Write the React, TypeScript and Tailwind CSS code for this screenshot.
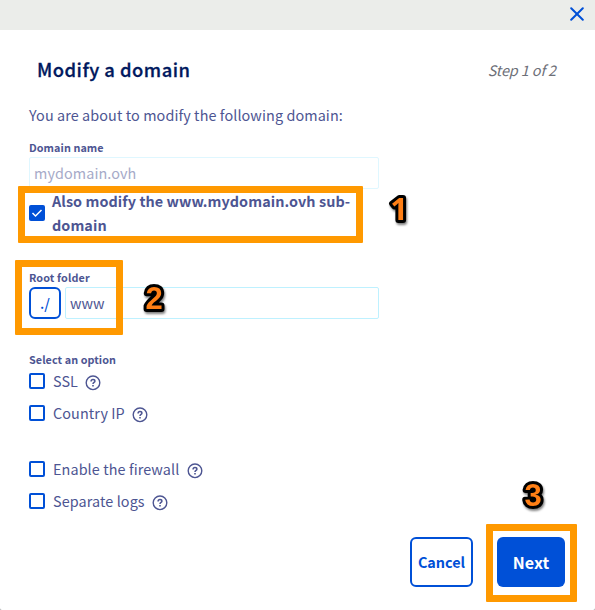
import type { ReactNode } from "react";

function HelpIcon() {
  return (
    <svg className="mt-[3px] h-4 w-4 shrink-0" viewBox="0 0 16 16" fill="none" stroke="#4d5592">
      <circle cx="8" cy="7.800" r="6.800" strokeWidth="1.4" />
      <path d="M6.100 6.400c0-1.200.8-1.800 1.900-1.800s1.900.7 1.900 1.600c0 1.200-1.900 1.300-1.900 2.700" strokeWidth="1.5" />
      <path d="M8 9.900v1.500" strokeWidth="1.600" />
    </svg>
  );
}

function Option({ label, text, className = "" }: { label: string; text: string; className?: string }) {
  return (
    <div className={`flex h-8 items-center ${className}`}>
      <span className="h-4 w-4 shrink-0 rounded-[2px] border-2 border-[#0050d7] bg-white" />
      <span className={`ml-2 shrink-0 whitespace-nowrap text-[14.4px] leading-6 tracking-[0.09px] ${text}`}>{label}</span>
      <HelpIcon />
    </div>
  );
}

function Marker({ children, className }: { children: ReactNode; className: string }) {
  return (
    <svg className={`absolute h-12 w-10 overflow-visible drop-shadow-[1px_2px_1px_rgba(0,0,0,0.5)] ${className}`} viewBox="0 0 40 48">
      <text
        x="20"
        y="35"
        textAnchor="middle"
        fill="#ff7f15"
        stroke="#000"
        strokeWidth="6"
        strokeLinejoin="round"
        paintOrder="stroke"
      >
        {children}
      </text>
    </svg>
  );
}

export default function App() {
  return (
    <div className="h-[610px] w-[595px] bg-[#a5a7a9]">
      <div className="relative flex h-[610px] flex-col overflow-hidden rounded-b-[2px] bg-white font-['Noto_Sans_CJK_SC',sans-serif] text-[#4d5592]">
        <header className="flex h-[30px] shrink-0 items-center justify-end bg-[#ebedea] pr-[11px]">
          <svg className="-mt-[2px] h-[14px] w-[14px]" viewBox="0 0 14 14" stroke="#0050d7" strokeWidth="2" strokeLinecap="round">
            <path d="M1.200 1.200 12.800 12.800M12.800 1.200 1.200 12.800" />
          </svg>
        </header>

        <div className="mt-6 flex h-8 items-center justify-between pl-[37px] pr-[38px]">
          <h1 className="-mt-[2px] text-[18.4px] font-medium leading-8 tracking-[0.48px] text-[#00185e] [-webkit-text-stroke:0.3px_#00185e]">
            Modify a domain
          </h1>
          <span className="mr-px text-[14.4px] italic leading-8 tracking-[-0.1px] text-[#6d6f78]">Step 1 of 2</span>
        </div>

        <main className="pl-[29px]">
          <p className="mt-[17px] text-[14.4px] leading-6 tracking-[0.09px]">You are about to modify the following domain:</p>
          <label className="mt-3 block h-[18px] text-[10.8px] font-bold leading-4 tracking-[0.07px]">Domain name</label>
          <div className="flex h-8 w-[350px] items-center rounded-[2px] border border-[#dff7ff] pl-1 text-[14.4px] tracking-[0.09px] text-[#a6aac8]">
            mydomain.ovh
          </div>
          <div className="flex h-12 items-center">
            <span className="flex h-4 w-4 shrink-0 items-center justify-center rounded-[2px] bg-[#0050d7]">
              <svg className="h-3 w-3" viewBox="0 0 12 12" fill="none" stroke="#fff" strokeWidth="1.500">
                <path d="m1.500 6 3 3 6-6" />
              </svg>
            </span>
            <span className="ml-[7px] whitespace-nowrap text-[14.4px] font-bold leading-6 tracking-[0.07px]">
              Also modify the www.mydomain.ovh sub-
              <br />
              domain
            </span>
          </div>

          <label className="mt-8 block h-[18px] text-[10.8px] font-bold leading-4 tracking-[0.12px]">Root folder</label>
          <div className="flex gap-1">
            <span className="flex h-8 w-8 items-center justify-center rounded-[6px] border-2 border-[#0050d7] text-[14.4px] font-medium text-[#0050d7]">./</span>
            <div className="flex h-8 w-[314px] items-center rounded-[2px] border border-[#bef1ff] pl-1 text-[14.4px]">www</div>
          </div>

          <label className="mt-8 block h-[14px] text-[10.8px] font-bold leading-4 tracking-[0.07px]">Select an option</label>
          <Option label="SSL" text="w-[32px]" />
          <Option label="Country IP" text="w-[79px]" />
          <Option label="Enable the firewall" text="w-[134px]" className="mt-6" />
          <Option label="Separate logs" text="w-[99px]" />
        </main>

        <footer className="mt-5 flex h-[50px] gap-6 pl-[410px]">
          <button className="w-[63px] rounded-[6px] border-2 border-[#0050d7] text-[14.4px] font-bold text-[#0050d7]">Cancel</button>
          <button className="w-[68px] rounded-[6px] bg-[#0050d7] text-[16px] font-bold text-white">Next</button>
        </footer>

        <div className="absolute left-[18px] top-[186px] h-[57px] w-[345px] rounded-[1px] border-[7px] border-[#ff9900]" />
        <div className="absolute left-[15px] top-[260px] h-[75px] w-[108px] rounded-[1px] border-[7px] border-[#ff9900]" />
        <div className="absolute left-[486px] top-[524px] h-[78px] w-[91px] rounded-[1px] border-[7px] border-[#ff9900]" />
        <Marker className="left-[379px] top-[185px] font-['Open_Sans',sans-serif] text-[31px] font-bold">1</Marker>
        <Marker className="left-[134px] top-[274px] font-['Liberation_Sans',sans-serif] text-[31px] font-bold">2</Marker>
        <Marker className="left-[513px] top-[471px] font-['Liberation_Sans',sans-serif] text-[31px] font-bold">3</Marker>
      </div>
    </div>
  );
}
